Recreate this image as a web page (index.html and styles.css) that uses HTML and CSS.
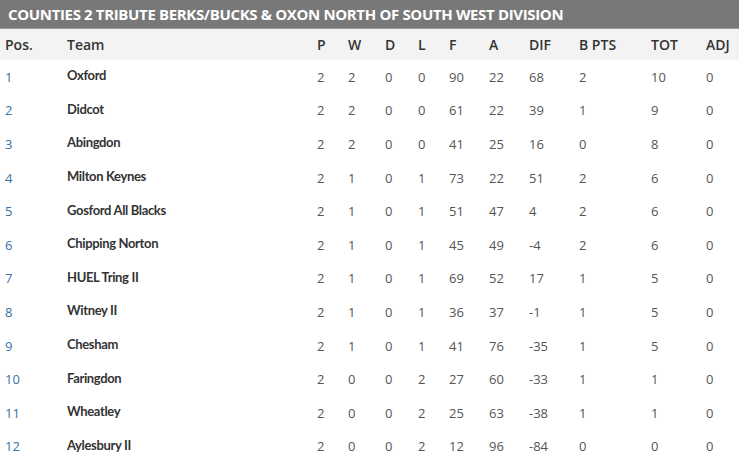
FILE: index.html
```html
<!DOCTYPE html>
<html>
<head>
<meta charset="utf-8">
<link rel="stylesheet" href="styles.css">
</head>
<body>
<div class="league">
  <h2 class="title">COUNTIES 2 TRIBUTE BERKS/BUCKS &amp; OXON NORTH OF SOUTH WEST DIVISION</h2>
  <table class="table">
    <colgroup>
      <col class="c-pos"><col class="c-team"><col class="c-p"><col class="c-w"><col class="c-d"><col class="c-l"><col class="c-f"><col class="c-a"><col class="c-dif"><col class="c-bp"><col class="c-tot"><col class="c-adj">
    </colgroup>
    <thead>
      <tr><th>Pos.</th><th>Team</th><th>P</th><th>W</th><th>D</th><th>L</th><th>F</th><th>A</th><th>DIF</th><th>B PTS</th><th>TOT</th><th>ADJ</th></tr>
    </thead>
    <tbody>
      <tr><td class="pos">1</td><td class="team">Oxford</td><td>2</td><td>2</td><td>0</td><td>0</td><td>90</td><td>22</td><td>68</td><td>2</td><td>10</td><td>0</td></tr>
      <tr><td class="pos">2</td><td class="team">Didcot</td><td>2</td><td>2</td><td>0</td><td>0</td><td>61</td><td>22</td><td>39</td><td>1</td><td>9</td><td>0</td></tr>
      <tr><td class="pos">3</td><td class="team">Abingdon</td><td>2</td><td>2</td><td>0</td><td>0</td><td>41</td><td>25</td><td>16</td><td>0</td><td>8</td><td>0</td></tr>
      <tr><td class="pos">4</td><td class="team">Milton Keynes</td><td>2</td><td>1</td><td>0</td><td>1</td><td>73</td><td>22</td><td>51</td><td>2</td><td>6</td><td>0</td></tr>
      <tr><td class="pos">5</td><td class="team">Gosford All Blacks</td><td>2</td><td>1</td><td>0</td><td>1</td><td>51</td><td>47</td><td>4</td><td>2</td><td>6</td><td>0</td></tr>
      <tr><td class="pos">6</td><td class="team">Chipping Norton</td><td>2</td><td>1</td><td>0</td><td>1</td><td>45</td><td>49</td><td>-4</td><td>2</td><td>6</td><td>0</td></tr>
      <tr><td class="pos">7</td><td class="team">HUEL Tring II</td><td>2</td><td>1</td><td>0</td><td>1</td><td>69</td><td>52</td><td>17</td><td>1</td><td>5</td><td>0</td></tr>
      <tr><td class="pos">8</td><td class="team">Witney II</td><td>2</td><td>1</td><td>0</td><td>1</td><td>36</td><td>37</td><td>-1</td><td>1</td><td>5</td><td>0</td></tr>
      <tr><td class="pos">9</td><td class="team">Chesham</td><td>2</td><td>1</td><td>0</td><td>1</td><td>41</td><td>76</td><td>-35</td><td>1</td><td>5</td><td>0</td></tr>
      <tr><td class="pos">10</td><td class="team">Faringdon</td><td>2</td><td>0</td><td>0</td><td>2</td><td>27</td><td>60</td><td>-33</td><td>1</td><td>1</td><td>0</td></tr>
      <tr><td class="pos">11</td><td class="team">Wheatley</td><td>2</td><td>0</td><td>0</td><td>2</td><td>25</td><td>63</td><td>-38</td><td>1</td><td>1</td><td>0</td></tr>
      <tr><td class="pos">12</td><td class="team">Aylesbury II</td><td>2</td><td>0</td><td>0</td><td>2</td><td>12</td><td>96</td><td>-84</td><td>0</td><td>0</td><td>0</td></tr>
    </tbody>
  </table>
</div>
</body>
</html>
```

FILE: styles.css
```css
html, body {
  margin: 0;
  padding: 0;
  background: #fff;
}
body {
  font-family: "Open Sans", "DejaVu Sans", sans-serif;
  color: #555;
}
.league {
  width: 739px;
}
.title {
  margin: 0;
  height: 28px;
  line-height: 28px;
  padding: 0 8px;
  background: #787878;
  color: #fff;
  font-size: 15px;
  font-weight: 700;
  letter-spacing: -0.35px;
  white-space: nowrap;
  border-bottom: 1px solid #9a9a9a;
}
.table {
  width: 739px;
  border-collapse: collapse;
  table-layout: fixed;
}
.c-pos { width: 62px; }
.c-team { width: 250px; }
.c-p { width: 31px; }
.c-w { width: 37px; }
.c-d { width: 33px; }
.c-l { width: 31px; }
.c-f { width: 40px; }
.c-a { width: 40px; }
.c-dif { width: 50px; }
.c-bp { width: 72px; }
.c-tot { width: 55px; }
.c-adj { width: 38px; }
.table th {
  box-sizing: border-box;
  background: #f3f3f3;
  color: #333;
  font-size: 14px;
  font-weight: 600;
  text-align: left;
  height: 31px;
  padding: 0 0 0 5px;
  white-space: nowrap;
}
.table tbody tr {
  height: 33.6px;
}
.table td {
  box-sizing: border-box;
  height: 33.6px;
  padding: 0 0 0 5px;
  font-size: 13px;
  line-height: 18px;
  color: #555;
  white-space: nowrap;
}
.table td.pos {
  color: #3672a8;
}
.table td.team {
  font-family: Lato, "Open Sans", sans-serif;
  color: #333;
  font-weight: 700;
  font-size: 13px;
  letter-spacing: -0.35px;
  padding: 0 0 3px 5px;
}
```
